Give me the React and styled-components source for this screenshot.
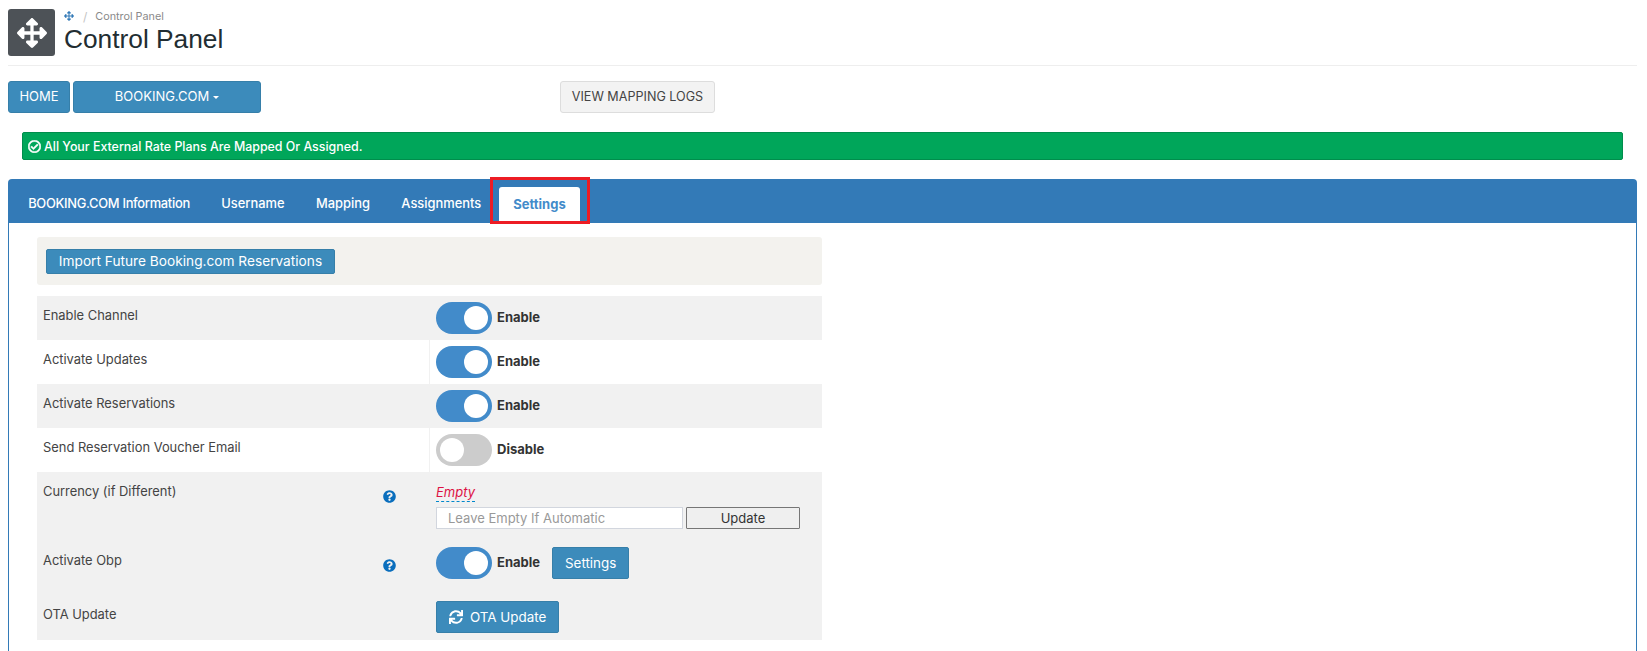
import styled, { createGlobalStyle } from "styled-components";
import {
  FaArrowsAlt,
  FaRegCheckCircle,
  FaQuestionCircle,
  FaSync,
} from "react-icons/fa";

const GlobalStyle = createGlobalStyle`
  html, body {
    margin: 0;
    padding: 0;
    background: #ffffff;
    overflow: hidden;
  }
  body {
    font-family: "Inter", "Open Sans", sans-serif;
    color: #333333;
  }
`;

const Toggle = ({ on }) => (
  <ToggleBox>
    <Track $on={on}>
      <Knob $on={on} />
    </Track>
    <ToggleLabel>{on ? "Enable" : "Disable"}</ToggleLabel>
  </ToggleBox>
);

const Help = () => (
  <HelpIcon>
    <FaQuestionCircle size={13} />
  </HelpIcon>
);

const App = () => {
  return (
    <Page>
      <GlobalStyle />
      <Header>
        <Logo>
          <FaArrowsAlt size={30} />
        </Logo>
        <HeaderText>
          <Breadcrumb>
            <FaArrowsAlt size={10} color="#337ab7" />
            <Slash>/</Slash>
            <span>Control Panel</span>
          </Breadcrumb>
          <Title>Control Panel</Title>
        </HeaderText>
      </Header>

      <Toolbar>
        <ToolBtn $width={62}>HOME</ToolBtn>
        <ToolBtn $width={188}>
          BOOKING.COM
          <Caret />
        </ToolBtn>
        <LogsBtn>VIEW MAPPING LOGS</LogsBtn>
      </Toolbar>

      <Alert>
        <FaRegCheckCircle size={13} stroke="#ffffff" strokeWidth={24} />
        All Your External Rate Plans Are Mapped Or Assigned.
      </Alert>

      <Panel>
        <TabBar>
          <Tab $tight>BOOKING.COM Information</Tab>
          <Tab>Username</Tab>
          <Tab>Mapping</Tab>
          <Tab>Assignments</Tab>
          <ActiveTab>
            <TabMarker />
            Settings
          </ActiveTab>
        </TabBar>

        <PanelBody>
          <ImportBox>
            <ImportBtn>Import Future Booking.com Reservations</ImportBtn>
          </ImportBox>

          <Rows>
            <Row $height={44}>
              <LabelCell>Enable Channel</LabelCell>
              <ValueCell>
                <Toggle on />
              </ValueCell>
            </Row>
            <Row $height={44} $white>
              <LabelCell>Activate Updates</LabelCell>
              <ValueCell>
                <Toggle on />
              </ValueCell>
            </Row>
            <Row $height={44}>
              <LabelCell>Activate Reservations</LabelCell>
              <ValueCell>
                <Toggle on />
              </ValueCell>
            </Row>
            <Row $height={44} $white>
              <LabelCell>Send Reservation Voucher Email</LabelCell>
              <ValueCell>
                <Toggle />
              </ValueCell>
            </Row>
            <Row $height={69}>
              <LabelCell>
                Currency (if Different)
                <Help />
              </LabelCell>
              <ValueCell>
                <EmptyLink>Empty</EmptyLink>
                <InputRow>
                  <CurrencyInput placeholder="Leave Empty If Automatic" />
                  <UpdateBtn>Update</UpdateBtn>
                </InputRow>
              </ValueCell>
            </Row>
            <Row $height={54}>
              <LabelCell>
                Activate Obp
                <Help />
              </LabelCell>
              <ValueCell>
                <InlineRow>
                  <Toggle on />
                  <ActionBtn>Settings</ActionBtn>
                </InlineRow>
              </ValueCell>
            </Row>
            <Row $height={45}>
              <LabelCell>OTA Update</LabelCell>
              <ValueCell>
                <ActionBtn>
                  <FaSync size={14} />
                  OTA Update
                </ActionBtn>
              </ValueCell>
            </Row>
          </Rows>
        </PanelBody>
      </Panel>
    </Page>
  );
};

const Page = styled.div`
  padding: 9px 10px 0 8px;
`;

const Header = styled.div`
  display: flex;
  gap: 9px;
  height: 56px;
  border-bottom: 1px solid #eeeeee;
`;

const Logo = styled.div`
  width: 47px;
  height: 47px;
  border-radius: 3px;
  background: #4d5257;
  color: #ffffff;
  display: flex;
  align-items: center;
  justify-content: center;
`;

const HeaderText = styled.div`
  display: flex;
  flex-direction: column;
`;

const Breadcrumb = styled.div`
  display: flex;
  align-items: center;
  height: 14px;
  font-size: 10.8px;
  color: #8a8a8a;
`;

const Slash = styled.span`
  margin: 0 8px 0 9px;
  color: #c4c4c4;
  font-size: 12px;
`;

const Title = styled.h1`
  margin: 0;
  font-family: "Liberation Sans", Arial, sans-serif;
  font-weight: 400;
  font-size: 26.3px;
  line-height: 32px;
  color: #222d32;
`;

const Toolbar = styled.div`
  display: flex;
  gap: 3px;
  margin-top: 15px;
`;

const ToolBtn = styled.button`
  width: ${(props) => props.$width}px;
  height: 32px;
  padding: 0 0 2px;
  background: #3c8bbb;
  border: 1px solid #367fa9;
  border-radius: 3px;
  color: #ffffff;
  font-family: inherit;
  font-size: 13px;
`;

const Caret = styled.span`
  display: inline-block;
  margin-left: 4px;
  vertical-align: middle;
  border-top: 3px solid #ffffff;
  border-left: 3px solid transparent;
  border-right: 3px solid transparent;
`;

const LogsBtn = styled.button`
  width: 155px;
  height: 32px;
  margin-left: 296px;
  padding: 0 0 2px;
  background: #f3f3f3;
  border: 1px solid #dddddd;
  border-radius: 3px;
  color: #444444;
  font-family: inherit;
  font-size: 12.6px;
`;

const Alert = styled.div`
  display: flex;
  align-items: center;
  gap: 3px;
  box-sizing: border-box;
  height: 28px;
  margin: 19px 14px 0 14px;
  padding: 0 5px;
  background: #00a65a;
  border: 1px solid #008d4c;
  border-radius: 2px;
  color: #ffffff;
  font-size: 12.4px;
  font-weight: 500;
`;

const Panel = styled.div`
  margin-top: 19px;
  border: 1px solid #337ab7;
  border-bottom: none;
  border-radius: 4px 4px 0 0;
`;

const TabBar = styled.div`
  display: flex;
  align-items: flex-end;
  height: 43px;
  padding-left: 3.5px;
  background: #337ab7;
`;

const Tab = styled.div`
  display: flex;
  align-items: center;
  height: 36px;
  padding: 0 15.7px 3px;
  box-sizing: border-box;
  color: #ffffff;
  font-size: 12.9px;
  font-weight: 500;
  letter-spacing: ${(props) => (props.$tight ? "-0.3px" : "0")};
`;

const ActiveTab = styled(Tab)`
  position: relative;
  justify-content: center;
  width: 81px;
  margin-left: 2px;
  padding: 0 0 3px;
  background: #ffffff;
  border-radius: 3px 3px 0 0;
  color: #428bca;
  font-size: 13px;
  font-weight: 700;
`;

/* red highlight drawn over the screenshot */
const TabMarker = styled.span`
  position: absolute;
  top: -10px;
  bottom: -1px;
  left: -9px;
  right: -10px;
  border: 3px solid #ed1c24;
`;

const PanelBody = styled.div`
  padding: 14px 0 0 28px;
  height: 420px;
`;

const ImportBox = styled.div`
  display: flex;
  align-items: center;
  box-sizing: border-box;
  width: 785px;
  height: 48px;
  padding-left: 9px;
  background: #f3f2ee;
  border-radius: 3px;
`;

const ImportBtn = styled.button`
  height: 25px;
  width: 289px;
  padding: 0;
  background: #3c8bbb;
  border: 1px solid #367fa9;
  border-radius: 2px;
  color: #ffffff;
  font-family: inherit;
  font-size: 13.7px;
`;

const Rows = styled.div`
  width: 785px;
  margin-top: 11px;
`;

const Row = styled.div`
  display: grid;
  grid-template-columns: 392px 1fr;
  height: ${(props) => props.$height}px;
  background: ${(props) => (props.$white ? "#ffffff" : "#f1f1f1")};
`;

const LabelCell = styled.div`
  display: flex;
  justify-content: space-between;
  box-sizing: border-box;
  padding: 12px 33px 0 6px;
  font-size: 12.9px;
  color: #444444;
  line-height: 15px;
`;

const ValueCell = styled.div`
  box-sizing: border-box;
  padding: 6px 0 0 6px;
  border-left: 1px solid #f1f1f1;
`;

const HelpIcon = styled.span`
  color: #0a6ebd;
  margin-top: 6px;
  line-height: 0;
`;

const ToggleBox = styled.div`
  display: flex;
  align-items: center;
  gap: 5px;
`;

const Track = styled.div`
  display: flex;
  align-items: center;
  justify-content: ${(props) => (props.$on ? "flex-end" : "flex-start")};
  box-sizing: border-box;
  width: 56px;
  height: 32px;
  padding: 0 4px;
  border-radius: 16px;
  background: ${(props) => (props.$on ? "#428bca" : "#cccccc")};
`;

const Knob = styled.span`
  width: 24px;
  height: 24px;
  border-radius: 50%;
  background: #ffffff;
`;

const ToggleLabel = styled.span`
  padding-bottom: 2px;
  font-size: 13px;
  font-weight: 700;
  color: #333333;
`;

const EmptyLink = styled.span`
  display: inline-block;
  margin-top: 5px;
  font-size: 13px;
  font-style: italic;
  line-height: 18px;
  color: #dd1144;
  border-bottom: 1px dashed #0088cc;
`;

const InputRow = styled.div`
  display: flex;
  gap: 3px;
  margin-top: 5px;
`;

const CurrencyInput = styled.input`
  box-sizing: border-box;
  width: 247px;
  height: 22px;
  padding: 0 11px;
  background: #ffffff;
  border: 1px solid #d2d6de;
  font-family: inherit;
  font-size: 13px;
  &::placeholder {
    color: #999999;
  }
`;

const UpdateBtn = styled.button`
  width: 114px;
  height: 22px;
  padding: 0;
  background: #efefef;
  border: 1px solid #767676;
  border-radius: 1px;
  color: #333333;
  font-family: inherit;
  font-size: 13px;
`;

const InlineRow = styled.div`
  display: flex;
  align-items: center;
  gap: 12px;
`;

const ActionBtn = styled.button`
  display: inline-flex;
  align-items: center;
  justify-content: center;
  gap: 7px;
  height: 32px;
  padding: 0 12px 1px;
  background: #3c8bbb;
  border: 1px solid #367fa9;
  border-radius: 2px;
  color: #ffffff;
  font-family: inherit;
  font-size: 13.4px;
`;

export default App;
